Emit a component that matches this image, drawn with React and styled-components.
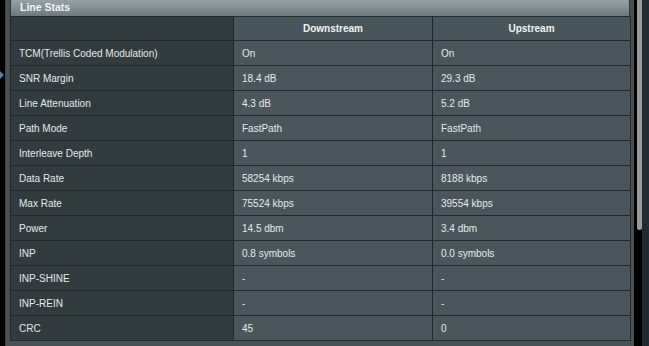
import React from 'react'
import styled, { createGlobalStyle } from 'styled-components'

const Global = createGlobalStyle`
  html, body { margin: 0; padding: 0; background: #000; }
  body { font-family: "Liberation Sans", Arial, sans-serif; }
`

const Page = styled.div`
  display: flex;
  width: 649px;
  height: 346px;
  overflow: hidden;
  background: #000;
`

const Rail = styled.div`
  position: relative;
  width: 5px;
  flex: none;
  background: #000;
`

const Marker = styled.div`
  position: absolute;
  left: 0;
  top: 71px;
  width: 0;
  height: 0;
  border-top: 4px solid transparent;
  border-bottom: 4px solid transparent;
  border-left: 4px solid #4f86b0;
`

const Panel = styled.div`
  width: 629px;
  flex: none;
  background: #485154;
  padding: 0 4px 5px 4px;
  box-sizing: border-box;
  border-left: 1px solid #3c4447;
`

const Title = styled.div`
  height: 16px;
  line-height: 15px;
  padding-left: 9px;
  font-size: 10.5px;
  font-weight: bold;
  color: #f2f4f4;
  background: linear-gradient(#97a2a6, #6d797d);
  border-left: 1px solid #2a3133;
  border-right: 1px solid #2a3133;
  box-sizing: border-box;
`

const Table = styled.table`
  width: 620px;
  border-collapse: collapse;
  table-layout: fixed;
  font-size: 10px;
  color: #e6e9ea;
`

const Row = styled.tr`
  height: ${p => (p.$head ? '24px' : '25px')};
`

const Cell = styled.td`
  padding: 0 0 0 8px;
  border: 1px solid #22292b;
  background: ${p => (p.$label ? '#323b3e' : '#4a565b')};
  text-align: left;
  white-space: nowrap;
`

const Head = styled.th`
  padding: 0;
  border: 1px solid #22292b;
  background: ${p => (p.$blank ? '#323b3e' : '#48555a')};
  font-weight: bold;
  text-align: center;
  color: #f0f2f2;
`

const Scroll = styled.div`
  width: 8px;
  flex: none;
  background: #000;
  padding-left: 3px;
  box-sizing: border-box;
`

const Thumb = styled.div`
  width: 5px;
  height: 230px;
  background: #9a9a9a;
  border-radius: 0 0 3px 3px;
`

const Edge = styled.div`
  flex: 1;
  background: #1f2d33;
`

const rows = [
  ['TCM(Trellis Coded Modulation)', 'On', 'On'],
  ['SNR Margin', '18.4 dB', '29.3 dB'],
  ['Line Attenuation', '4.3 dB', '5.2 dB'],
  ['Path Mode', 'FastPath', 'FastPath'],
  ['Interleave Depth', '1', '1'],
  ['Data Rate', '58254 kbps', '8188 kbps'],
  ['Max Rate', '75524 kbps', '39554 kbps'],
  ['Power', '14.5 dbm', '3.4 dbm'],
  ['INP', '0.8 symbols', '0.0 symbols'],
  ['INP-SHINE', '-', '-'],
  ['INP-REIN', '-', '-'],
  ['CRC', '45', '0'],
]

export default function App() {
  return (
    <>
      <Global />
      <Page>
        <Rail>
          <Marker />
        </Rail>
        <Panel>
          <Title>Line Stats</Title>
          <Table>
            <colgroup>
              <col style={{ width: 223 }} />
              <col style={{ width: 199 }} />
              <col style={{ width: 198 }} />
            </colgroup>
            <thead>
              <Row $head>
                <Head $blank />
                <Head>Downstream</Head>
                <Head>Upstream</Head>
              </Row>
            </thead>
            <tbody>
              {rows.map(([name, down, up]) => (
                <Row key={name}>
                  <Cell $label>{name}</Cell>
                  <Cell>{down}</Cell>
                  <Cell>{up}</Cell>
                </Row>
              ))}
            </tbody>
          </Table>
        </Panel>
        <Scroll>
          <Thumb />
        </Scroll>
        <Edge />
      </Page>
    </>
  )
}
